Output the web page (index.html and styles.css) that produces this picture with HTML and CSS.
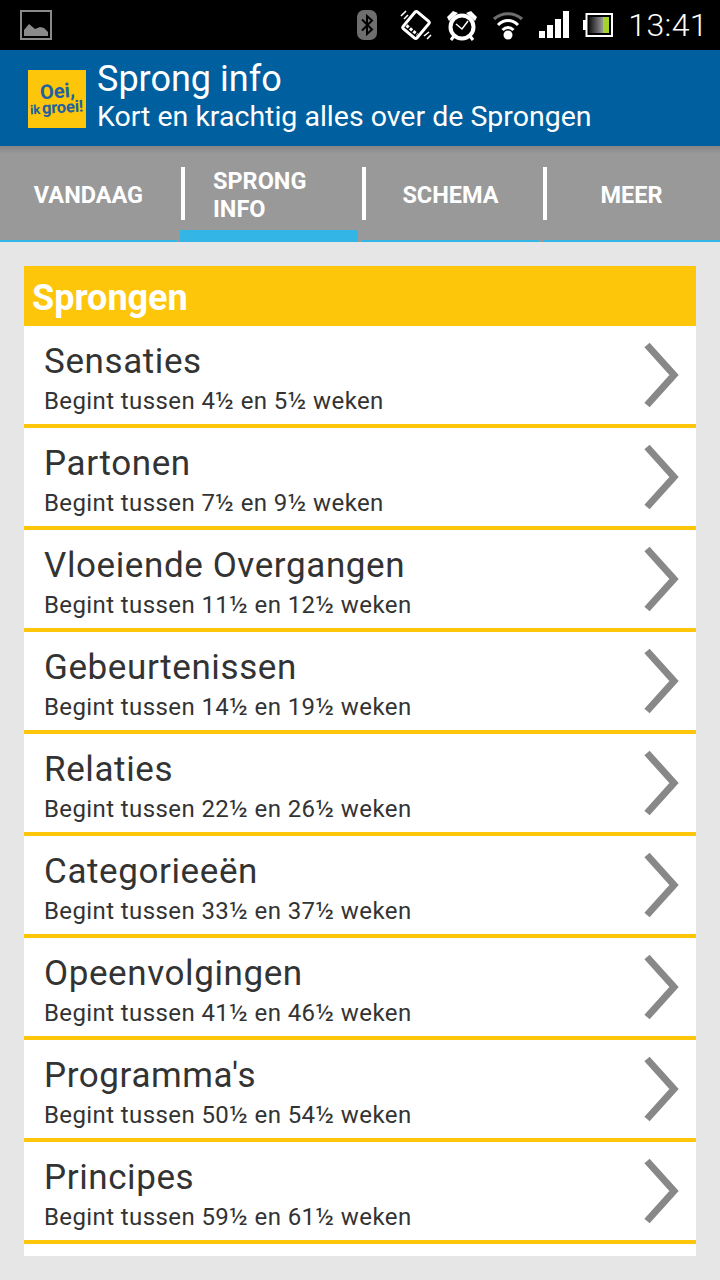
FILE: index.html
```html
<!DOCTYPE html>
<html lang="en">
<head>
    <meta charset="UTF-8">
    <meta name="viewport" content="width=device-width, initial-scale=1.0">
    <title>Sprong info</title>
    <link rel="stylesheet" href="styles.css">
</head>
<body>
    <div class="status-bar">
        <svg class="picture-icon" width="32" height="30" viewBox="0 0 32 30">
            <rect x="1" y="1" width="30" height="28" fill="none" stroke="#8a8a8a" stroke-width="2"/>
            <path d="M4 26V20L9 14L15 19L20 17L24 18L28 22V26Z" fill="#8a8a8a"/>
        </svg>
        <div class="status-icons">
            <svg class="bluetooth-icon" width="22" height="30" viewBox="0 0 22 30">
                <rect x="1" y="0" width="20" height="30" rx="7" fill="#6e6e6e"/>
                <path d="M6 9.500L16 19.500L11 24V6L16 10.500L6 20.500" fill="none" stroke="#000" stroke-width="2"/>
            </svg>
            <svg width="32" height="32" viewBox="0 0 32 32">
                <g transform="rotate(40 16 16)">
                    <rect x="7" y="5" width="18" height="22" rx="2" fill="none" stroke="#fff" stroke-width="3"/>
                    <path d="M9 22.500H23" stroke="#fff" stroke-width="3" stroke-dasharray="3 1.500"/>
                </g>
                <path d="M1 7L6 2M4 10L8 6M24 27L29 23M27 30L31 26" stroke="#fff" stroke-width="1.600"/>
            </svg>
            <svg width="32" height="32" viewBox="0 0 32 32">
                <circle cx="16" cy="18" r="11.500" fill="none" stroke="#fff" stroke-width="4"/>
                <path d="M10 15L16 20L22 12" fill="none" stroke="#fff" stroke-width="1.500"/>
                <path d="M1 8L7 2L12 4L3 12ZM31 8L25 2L20 4L29 12Z" fill="#fff"/>
                <path d="M8 27L5 31M24 27L27 31" stroke="#fff" stroke-width="3"/>
            </svg>
            <svg class="wifi-icon" width="32" height="30" viewBox="0 0 32 30">
                <path d="M2 9C10 2 22 2 30 9" fill="none" stroke="#6e6e6e" stroke-width="3"/>
                <path d="M6 15C12 9 20 9 26 15M10.500 20C14 16.500 18 16.500 21.500 20" fill="none" stroke="#fff" stroke-width="3"/>
                <circle cx="16" cy="25" r="4.500" fill="#fff"/>
            </svg>
            <svg width="30" height="28" viewBox="0 0 30 28">
                <path d="M0 20H6V27H0ZM8 14H14V27H8ZM16 8H22V27H16ZM24 0H30V27H24Z" fill="#fff"/>
            </svg>
            <svg width="30" height="24" viewBox="0 0 30 24">
                <defs>
                    <linearGradient id="charge">
                        <stop offset="0" stop-color="#111"/>
                        <stop offset="1" stop-color="#999"/>
                    </linearGradient>
                </defs>
                <rect x="0" y="7" width="3" height="10" fill="#fff"/>
                <rect x="3.500" y="1" width="25.500" height="22" fill="#000" stroke="#fff" stroke-width="2"/>
                <rect x="6" y="4" width="14" height="16" fill="url(#charge)"/>
                <rect x="20" y="4" width="6" height="16" fill="#a4d32a"/>
            </svg>
            <span class="clock">13:41</span>
        </div>
    </div>

    <header class="app-header">
        <div class="logo">
            <span class="logo-top">Oei,</span>
            <span class="logo-bottom"><small>ik</small>groei!</span>
        </div>
        <div class="app-titles">
            <h1>Sprong info</h1>
            <p>Kort en krachtig alles over de Sprongen</p>
        </div>
    </header>

    <nav class="tabs">
        <a class="tab">VANDAAG</a>
        <a class="tab active">SPRONG<br>INFO</a>
        <a class="tab">SCHEMA</a>
        <a class="tab">MEER</a>
    </nav>

    <main class="content">
        <section class="card">
            <h2>Sprongen</h2>
            <ul class="leap-list" id="leap-list">
                <li class="leap"><div class="leap-text"><h3>Sensaties</h3><p>Begint tussen 4½ en 5½ weken</p></div><svg class="chevron" width="36" height="66" viewBox="0 0 36 66"><path d="M4 3L31 33L4 63" fill="none" stroke="#888" stroke-width="7"/></svg></li>
                <li class="leap"><div class="leap-text"><h3>Partonen</h3><p>Begint tussen 7½ en 9½ weken</p></div><svg class="chevron" width="36" height="66" viewBox="0 0 36 66"><path d="M4 3L31 33L4 63" fill="none" stroke="#888" stroke-width="7"/></svg></li>
                <li class="leap"><div class="leap-text"><h3>Vloeiende Overgangen</h3><p>Begint tussen 11½ en 12½ weken</p></div><svg class="chevron" width="36" height="66" viewBox="0 0 36 66"><path d="M4 3L31 33L4 63" fill="none" stroke="#888" stroke-width="7"/></svg></li>
                <li class="leap"><div class="leap-text"><h3>Gebeurtenissen</h3><p>Begint tussen 14½ en 19½ weken</p></div><svg class="chevron" width="36" height="66" viewBox="0 0 36 66"><path d="M4 3L31 33L4 63" fill="none" stroke="#888" stroke-width="7"/></svg></li>
                <li class="leap"><div class="leap-text"><h3>Relaties</h3><p>Begint tussen 22½ en 26½ weken</p></div><svg class="chevron" width="36" height="66" viewBox="0 0 36 66"><path d="M4 3L31 33L4 63" fill="none" stroke="#888" stroke-width="7"/></svg></li>
                <li class="leap"><div class="leap-text"><h3>Categorieeën</h3><p>Begint tussen 33½ en 37½ weken</p></div><svg class="chevron" width="36" height="66" viewBox="0 0 36 66"><path d="M4 3L31 33L4 63" fill="none" stroke="#888" stroke-width="7"/></svg></li>
                <li class="leap"><div class="leap-text"><h3>Opeenvolgingen</h3><p>Begint tussen 41½ en 46½ weken</p></div><svg class="chevron" width="36" height="66" viewBox="0 0 36 66"><path d="M4 3L31 33L4 63" fill="none" stroke="#888" stroke-width="7"/></svg></li>
                <li class="leap"><div class="leap-text"><h3>Programma's</h3><p>Begint tussen 50½ en 54½ weken</p></div><svg class="chevron" width="36" height="66" viewBox="0 0 36 66"><path d="M4 3L31 33L4 63" fill="none" stroke="#888" stroke-width="7"/></svg></li>
                <li class="leap"><div class="leap-text"><h3>Principes</h3><p>Begint tussen 59½ en 61½ weken</p></div><svg class="chevron" width="36" height="66" viewBox="0 0 36 66"><path d="M4 3L31 33L4 63" fill="none" stroke="#888" stroke-width="7"/></svg></li>
            </ul>
        </section>
    </main>
</body>
</html>
```

FILE: styles.css
```css
* {
    box-sizing: border-box;
}

html, body {
    margin: 0;
    padding: 0;
    height: 1280px;
    overflow: hidden;
}

body {
    font-family: Roboto, "Liberation Sans", sans-serif;
    background-color: #e6e6e6;
}

h1, h2, h3, p, ul {
    margin: 0;
    padding: 0;
    font-weight: normal;
}

.status-bar {
    height: 50px;
    background-color: #000;
    display: flex;
    align-items: center;
    justify-content: space-between;
    padding: 0 12px 0 20px;
}

.status-icons {
    display: flex;
    align-items: center;
    gap: 14px;
}

.bluetooth-icon {
    margin-right: 8px;
}

.wifi-icon {
    margin-right: 1px;
}

.clock {
    color: #fff;
    font-size: 32px;
    font-weight: 300;
    letter-spacing: 0.4px;
    margin-left: 1px;
}

.app-header {
    height: 96px;
    background-color: #00609f;
    display: flex;
    align-items: center;
    padding: 0 0 0 28px;
    gap: 11px;
    color: #fff;
}

.logo {
    width: 58px;
    height: 58px;
    margin-top: 2px;
    background-color: #fec60b;
    color: #22619f;
    display: flex;
    flex-direction: column;
    align-items: center;
    justify-content: center;
    font-weight: 700;
}

.logo-top {
    font-size: 20px;
    line-height: 17px;
    transform: rotate(-4deg);
}

.logo-bottom {
    font-size: 16.500px;
    line-height: 15px;
    white-space: nowrap;
    letter-spacing: -0.2px;
    transform: rotate(-3deg);
}

.logo-bottom small {
    font-size: 13px;
    margin-right: 2px;
}

.app-titles {
    margin-top: -3px;
}

.app-titles h1 {
    font-size: 36px;
    line-height: 40px;
}

.app-titles p {
    font-size: 28.5px;
    line-height: 36px;
}

.tabs {
    height: 96px;
    background: linear-gradient(#858585, #999 8px);
    display: grid;
    grid-template-columns: 181px 181px 181px 177px;
}

.tab {
    position: relative;
    display: flex;
    align-items: center;
    justify-content: center;
    height: 96px;
    padding: 2px 4px 0 0;
    color: #fff;
    font-size: 23.500px;
    font-weight: 700;
    line-height: 28px;
}

.tab:last-child {
    padding-right: 0;
}

.tab.active {
    justify-content: flex-start;
    padding-left: 32px;
}

/* blue rule under each tab, thicker on the open one */
.tab::after {
    content: "";
    position: absolute;
    left: 0;
    right: 4px;
    bottom: 0;
    height: 2px;
    background-color: #33b5e5;
}

.tab:last-child::after {
    right: 0;
}

.tab.active::after {
    left: -1px;
    right: 4px;
    height: 12px;
}

.tab + .tab::before {
    content: "";
    position: absolute;
    left: 0;
    top: 21px;
    width: 4px;
    height: 53px;
    background-color: #fff;
}

.content {
    padding: 24px 24px 0;
}

.card {
    background-color: #fff;
    padding-bottom: 12px;
}

.card h2 {
    height: 60px;
    background-color: #fec60b;
    color: #fff;
    font-size: 36px;
    font-weight: 700;
    line-height: 64px;
    padding-left: 8px;
}

.leap-list {
    list-style: none;
}

.leap {
    height: 102px;
    border-bottom: 4px solid #fec60b;
    display: flex;
    align-items: center;
    justify-content: space-between;
    padding: 0 17px 0 20px;
    color: #333;
}

.leap-text {
    align-self: flex-start;
    padding-top: 15px;
}

.leap h3 {
    font-size: 35px;
    line-height: 42px;
    letter-spacing: 0.6px;
}

.leap p {
    font-size: 24px;
    line-height: 30px;
    letter-spacing: 0.4px;
    margin-top: 3px;
}
```
